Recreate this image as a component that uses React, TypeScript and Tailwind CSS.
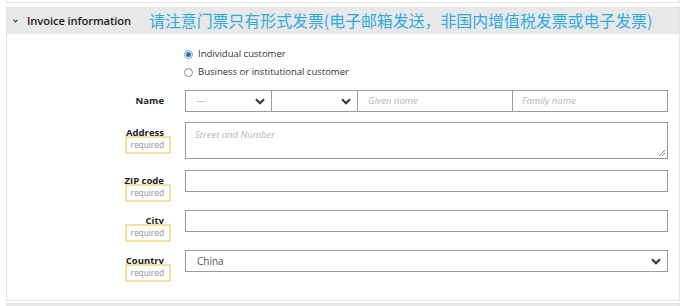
import React from "react";

const font = { fontFamily: '"Open Sans", "Noto Sans CJK SC", sans-serif' };

const Chevron: React.FC<{ className?: string }> = ({ className = "" }) => (
  <svg viewBox="0 0 10 7" className={className} fill="none" stroke="#3a3a3a" strokeWidth="2.2">
    <path d="M1 1.2 L5 5.2 L9 1.2" />
  </svg>
);

const Required: React.FC = () => (
  <div className="-mt-[8px] self-end w-[46px] h-[18px] border-2 border-[#f2e4a0] bg-white flex items-center justify-end pr-[5px] text-[8.3px] text-[#8f8f8f] leading-none">
    required
  </div>
);

const FieldLabel: React.FC<{ text: string; required?: boolean }> = ({ text, required }) => (
  <div className="w-[164px] shrink-0 flex flex-col">
    <div className="h-[22px] flex items-center justify-end pr-[7px] text-[9.5px] font-bold text-[#222]">{text}</div>
    {required && <Required />}
  </div>
);

export default function App() {
  return (
    <div className="w-[686px] h-[306px] bg-white overflow-hidden" style={font}>
      {/* tail of previous panel */}
      <div className="mx-[6px] h-[3px] border-x border-b border-[#e3e3e3]" />

      <div className="mx-[6px] mt-[4px] border border-[#e3e3e3]">
        <div className="h-[26px] bg-[#e8e8e8] flex items-center">
          <Chevron className="w-[5px] h-[4px] ml-[6px] mr-[9px]" />
          <span className="text-[11.2px] font-semibold text-[#1c1c1c] tracking-[-0.1px]">Invoice information</span>
          <span
            className="ml-[18px] text-[15.9px] text-[#2eaae2]"
            style={{ fontFamily: '"Noto Sans CJK SC", sans-serif' }}
          >
            请注意门票只有形式发票(电子邮箱发送，非国内增值税发票或电子发票)
          </span>
        </div>

        <div className="pt-[11px] pb-[18px] pr-[11px]">
          <div className="ml-[177px] text-[9.5px] text-[#333]">
            <div className="h-[18px] flex items-center gap-[5px]">
              <span className="w-[9px] h-[9px] rounded-full border border-[#7a9bc0] flex items-center justify-center bg-white">
                <span className="w-[5px] h-[5px] rounded-full bg-[#1e76c9]" />
              </span>
              Individual customer
            </div>
            <div className="h-[18px] flex items-center gap-[5px]">
              <span className="w-[9px] h-[9px] rounded-full border border-[#888] bg-white" />
              Business or institutional customer
            </div>
          </div>

          {/* Name */}
          <div className="flex mt-[9px] gap-[14px]">
            <FieldLabel text="Name" />
            <div className="flex-1 h-[22px] flex border border-[#9a9a9a] text-[9.5px]">
              <div className="w-[86px] flex items-center justify-between pl-[10px] pr-[6px] border-r border-[#9a9a9a] text-[#999]">
                <span>---</span>
                <Chevron className="w-[10px] h-[7px]" />
              </div>
              <div className="w-[86px] flex items-center justify-end pr-[6px] border-r border-[#9a9a9a]">
                <Chevron className="w-[10px] h-[7px]" />
              </div>
              <div className="w-[155px] flex items-center pl-[10px] border-r border-[#9a9a9a] italic text-[#b5b5b5]">
                Given name
              </div>
              <div className="flex-1 flex items-center pl-[9px] italic text-[#b5b5b5]">Family name</div>
            </div>
          </div>

          {/* Address */}
          <div className="flex mt-[10px] gap-[14px]">
            <FieldLabel text="Address" required />
            <div className="relative flex-1 h-[37px] border border-[#9a9a9a] pl-[9px] pt-[5px] text-[9.5px] italic text-[#b5b5b5]">
              Street and Number
              <svg className="absolute right-[1px] bottom-[1px] w-[8px] h-[8px]" viewBox="0 0 8 8" stroke="#777" strokeWidth="0.9">
                <path d="M1 7 L7 1 M4 7 L7 4" />
              </svg>
            </div>
          </div>

          {/* ZIP */}
          <div className="flex mt-[11px] gap-[14px]">
            <FieldLabel text="ZIP code" required />
            <div className="flex-1 h-[22px] border border-[#9a9a9a]" />
          </div>

          {/* City */}
          <div className="flex mt-[8px] gap-[14px]">
            <FieldLabel text="City" required />
            <div className="flex-1 h-[22px] border border-[#9a9a9a]" />
          </div>

          {/* Country */}
          <div className="flex mt-[8px] gap-[14px]">
            <FieldLabel text="Country" required />
            <div className="flex-1 h-[22px] border border-[#9a9a9a] flex items-center justify-between pl-[11px] pr-[6px] text-[10px] text-[#555]">
              <span>China</span>
              <Chevron className="w-[10px] h-[7px]" />
            </div>
          </div>
        </div>
      </div>

      {/* next panel */}
      <div className="mx-[6px] mt-[2px] h-[10px] border border-[#e3e3e3] bg-[#e8e8e8]" />
    </div>
  );
}
